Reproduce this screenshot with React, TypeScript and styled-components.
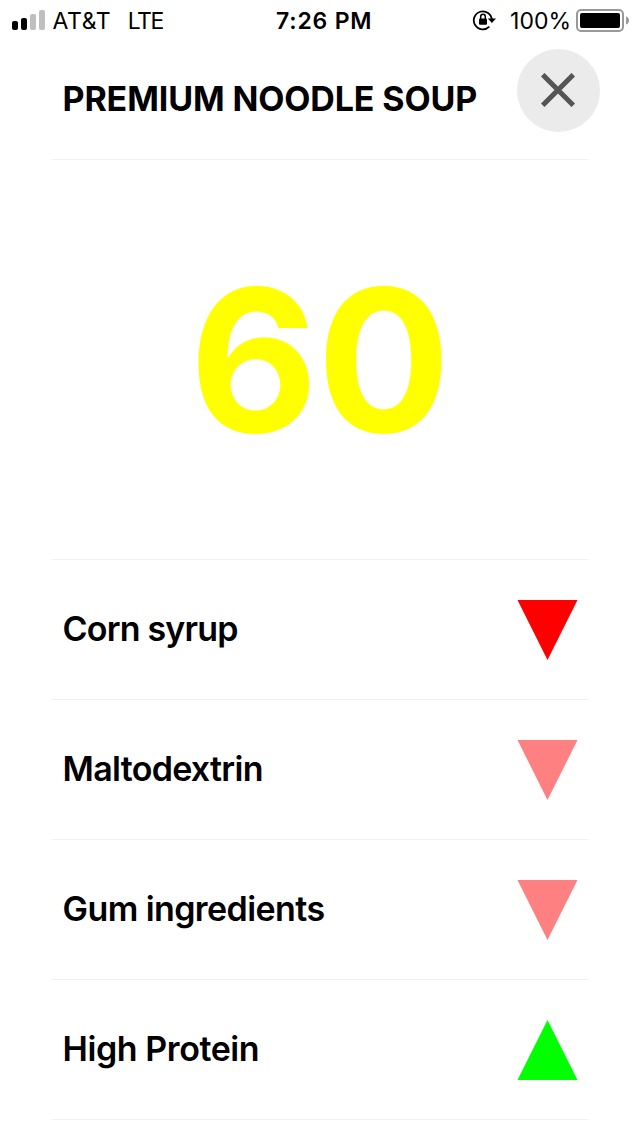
import React from 'react';
import styled, { createGlobalStyle } from 'styled-components';

const Global = createGlobalStyle`
  * { box-sizing: border-box; }
  body { margin: 0; background: #fff; color: #000; font-family: Inter, sans-serif; }
`;
const Screen = styled.div`width: 640px; height: 1136px; overflow: hidden; background: #fff;`;
const StatusBar = styled.header`
  display: grid; grid-template-columns: 264px 1fr auto; align-items: center;
  height: 40px; padding: 0 11px 0 12px;
`;
const StatusGroup = styled.div`display: flex; align-items: center;`;
const StatusText = styled.span<{ $gap?: number; $weight?: number; $track?: number }>`
  font-size: 23px; line-height: 38px; padding-top: 2px; white-space: nowrap;
  font-weight: ${p => p.$weight ?? 400};
  margin-left: ${p => p.$gap ?? 0}px;
  letter-spacing: ${p => p.$track ?? 0}px;
`;
const BatteryIcon = styled.svg`margin-left: 5px;`;
const Panel = styled.main`margin: 0 52px;`;
const Heading = styled.div`
  display: flex; justify-content: space-between; height: 120px;
  padding-left: 10.5px; border-bottom: 1px solid #f0f0f0;
`;
const Title = styled.h1`
  margin: 0; padding-top: 38px; font-size: 34px; line-height: 41px; font-weight: 700;
  letter-spacing: -0.12px; white-space: nowrap;
`;
const CloseButton = styled.button`
  width: 83px; height: 83px; margin: 9px -12px 0 0; padding: 0 1px 1px 0; border: 0; flex: none;
  border-radius: 50%; background: #ebebeb; display: grid; place-items: center;
`;
const Score = styled.div`
  height: 400px; display: flex; align-items: center; justify-content: center;
  border-bottom: 1px solid #f0f0f0; color: #ff0; font-size: 198px; font-weight: 700;
  line-height: 1; letter-spacing: -1px; padding-right: 1px;
`;
const Row = styled.div`
  height: 140px; padding: 0 10px 0 10.5px; display: flex; align-items: center;
  justify-content: space-between; border-bottom: 1px solid #f0f0f0;
`;
const Label = styled.span<{ $track: number }>`
  font-size: 34px; font-weight: 600; line-height: 41px; padding-bottom: 2px;
  letter-spacing: ${p => p.$track}px;
`;

const items = [
  { label: 'Corn syrup', color: '#ff0000', up: false, track: -0.8 },
  { label: 'Maltodextrin', color: '#ff8080', up: false, track: -0.7 },
  { label: 'Gum ingredients', color: '#ff8080', up: false, track: -0.58 },
  { label: 'High Protein', color: '#00ff00', up: true, track: -0.42 },
];

export default function App() {
  return (
    <Screen>
      <Global />
      <StatusBar>
        <StatusGroup>
          <svg width="33" height="20" viewBox="0 0 33 20">
            <rect x="0" y="11" width="6" height="9" rx="2" />
            <rect x="9" y="8" width="6" height="12" rx="2" />
            <rect x="18" y="4" width="6" height="16" rx="2" fill="#bfbfbf" />
            <rect x="27" y="0" width="6" height="20" rx="2" fill="#bfbfbf" />
          </svg>
          <StatusText $gap={7.5} $track={0.6}>AT&amp;T</StatusText>
          <StatusText $gap={16.5} $track={-1.5}>LTE</StatusText>
        </StatusGroup>
        <StatusText $weight={600} $track={0.8}>7:26 PM</StatusText>
        <StatusGroup>
          <svg width="24" height="22" viewBox="0 0 24 22" fill="none" stroke="#000" strokeWidth="1.8">
            <path d="M17.3 17.6A9 9 0 1 1 19.8 11" />
            <path d="M15.8 9.5H24L19.9 14Z" fill="#000" stroke="none" />
            <rect x="7" y="9.5" width="8" height="6.3" rx="1" fill="#000" stroke="none" />
            <path d="M8.7 10V7.6a2.3 2.3 0 0 1 4.6 0V10" strokeWidth="1.5" />
          </svg>
          <StatusText $gap={14}>100%</StatusText>
          <BatteryIcon width="53" height="24" viewBox="0 0 53 24">
            <rect x="1" y="2" width="46" height="21" rx="4" fill="none" stroke="#999" strokeWidth="2" />
            <rect x="4" y="5" width="40" height="15" rx="2" />
            <path d="M50 8.5c4 1 4 7 0 8z" fill="#999" />
          </BatteryIcon>
        </StatusGroup>
      </StatusBar>
      <Panel>
        <Heading>
          <Title>PREMIUM NOODLE SOUP</Title>
          <CloseButton aria-label="Close">
            <svg width="34" height="34" viewBox="0 0 34 34" stroke="#555" strokeWidth="5">
              <path d="M1.7 1.7L32.3 32.3M32.3 1.7L1.7 32.3" />
            </svg>
          </CloseButton>
        </Heading>
        <Score>60</Score>
        {items.map(i => (
          <Row key={i.label}>
            <Label $track={i.track}>{i.label}</Label>
            <svg width="61" height="61" viewBox="0 0 61 61" fill={i.color}>
              <path d={i.up ? 'M.5 61L30.5 1L60.5 61Z' : 'M.5 1H60.5L30.5 61Z'} />
            </svg>
          </Row>
        ))}
      </Panel>
    </Screen>
  );
}
